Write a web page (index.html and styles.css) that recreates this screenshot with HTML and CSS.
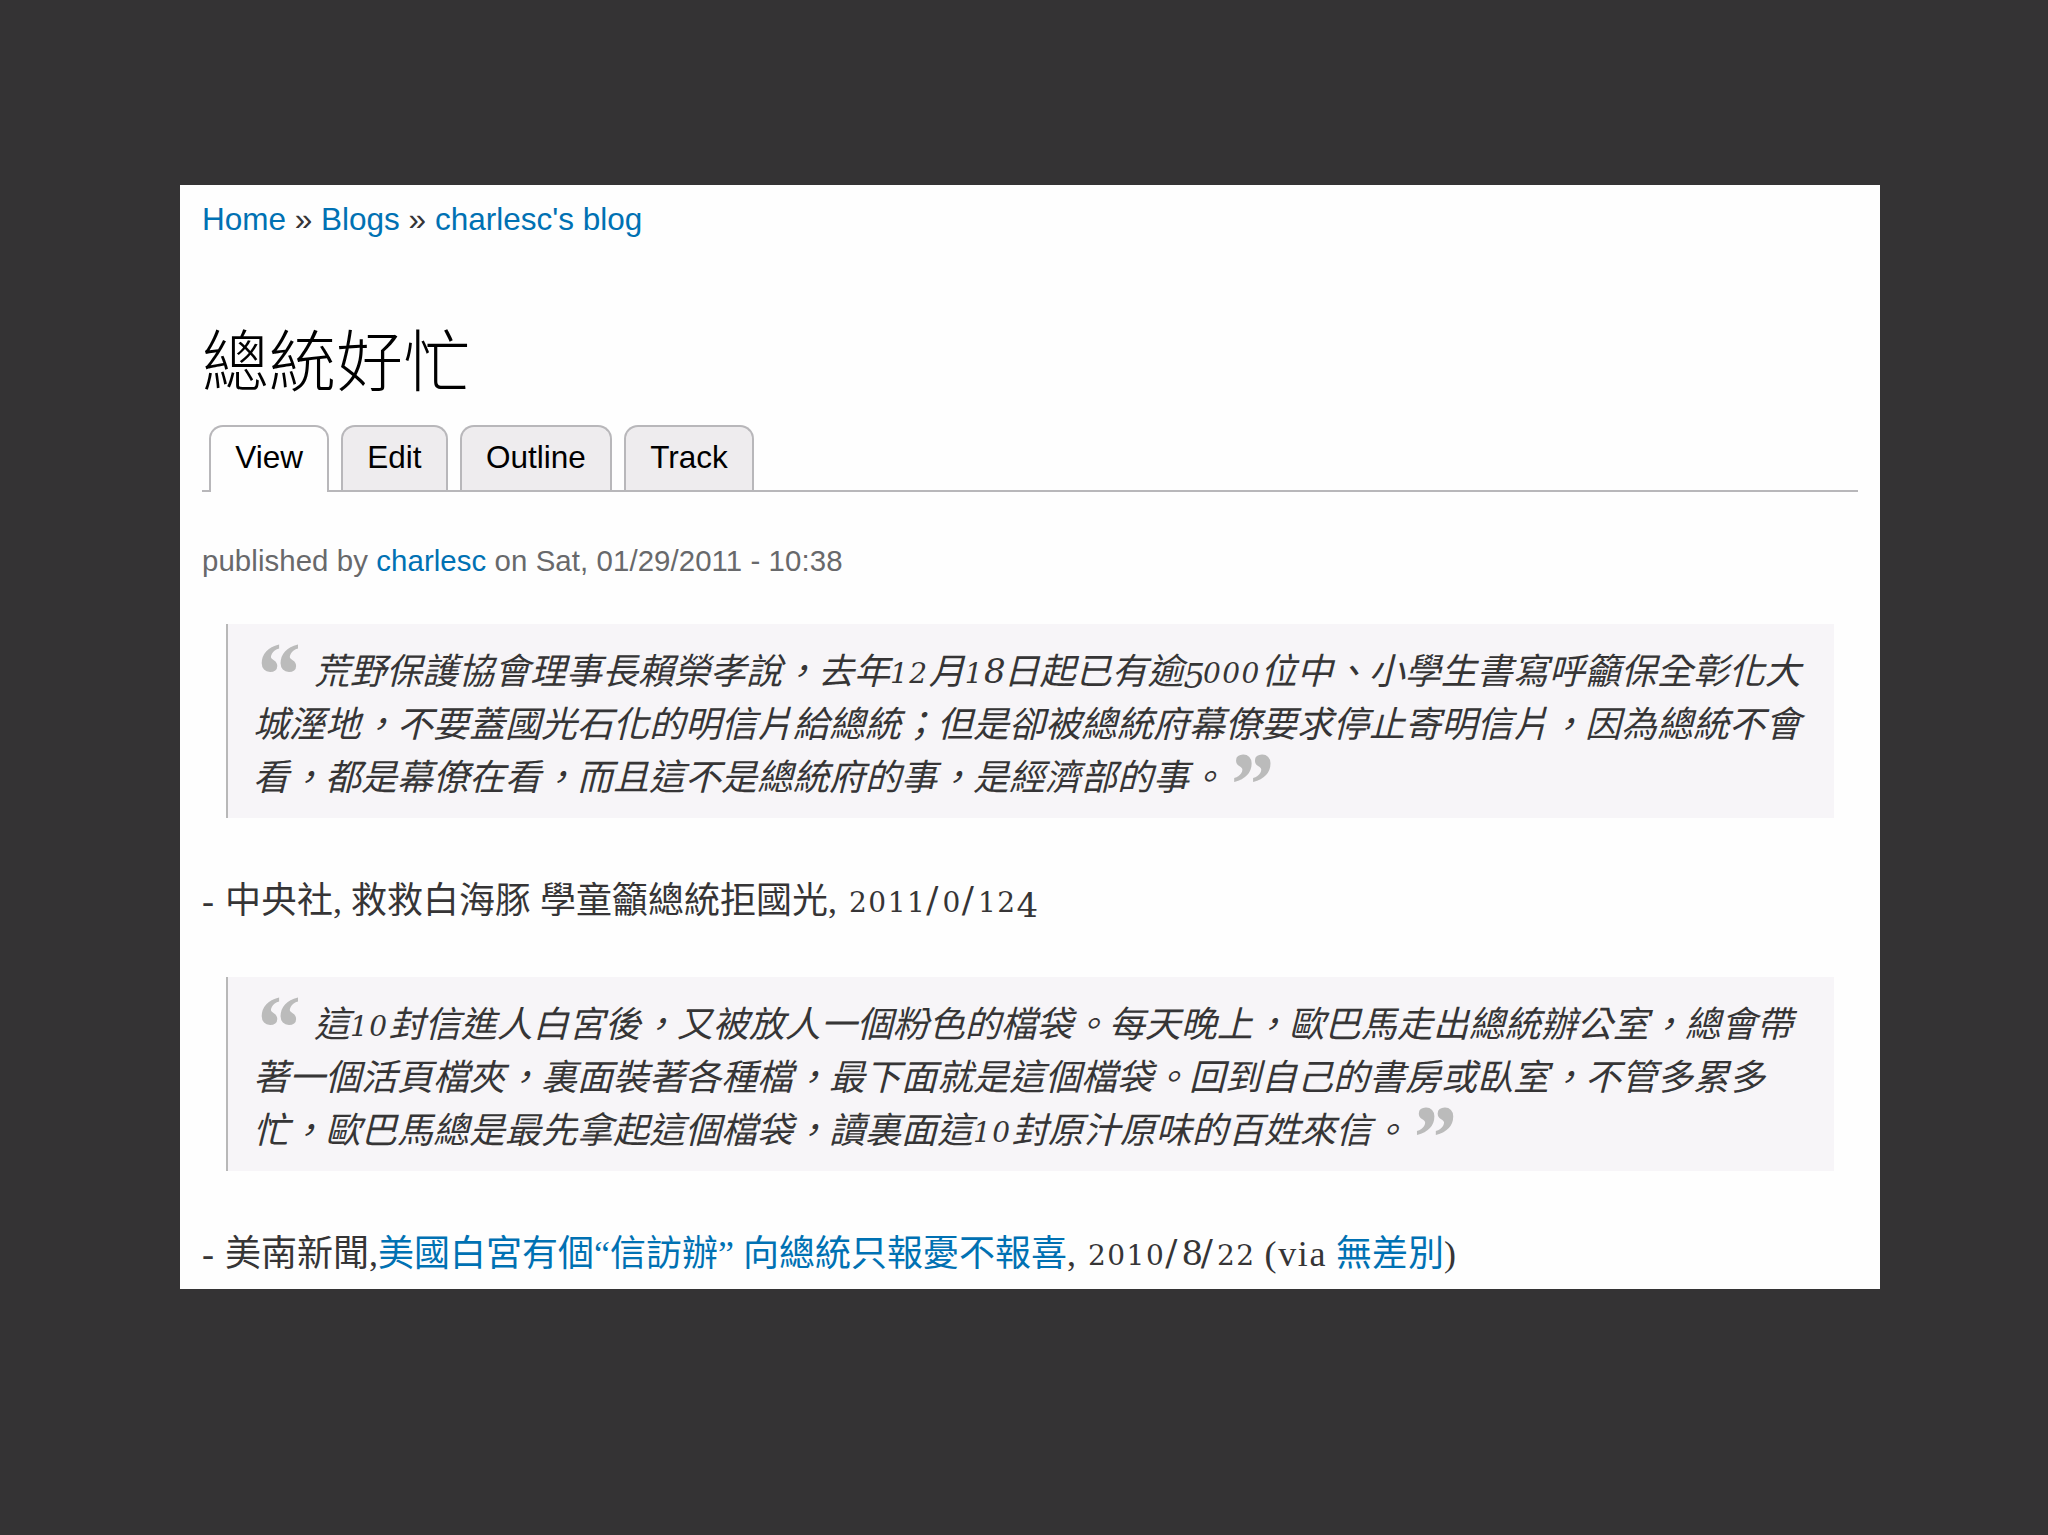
FILE: index.html
```html
<!DOCTYPE html>
<html lang="zh-Hant">

<head>
  <meta charset="UTF-8" />
  <title>總統好忙</title>
  <link rel="stylesheet" href="styles.css">
</head>

<body>
  <div class="page">
    <nav class="breadcrumb">
      <a href="#">Home</a> » <a href="#">Blogs</a> » <a href="#">charlesc's blog</a>
    </nav>

    <h1>總統好忙</h1>

    <ul class="tabs">
      <li class="active"><a href="#">View</a></li>
      <li><a href="#">Edit</a></li>
      <li><a href="#">Outline</a></li>
      <li><a href="#">Track</a></li>
    </ul>

    <p class="submitted">published by <a href="#">charlesc</a> on Sat, 01/29/2011 - 10:38</p>

    <div class="content">
      <blockquote>
        <span class="mark open">“</span>荒野保護協會理事長賴榮孝說，去年<span class="num">12</span>月<span class="num">1<span class="tall">8</span></span>日起已有逾<span class="num"><span class="low">5</span>000</span>位中、小學生書寫呼籲保全彰化大<br>
        城溼地，不要蓋國光石化的明信片給總統；但是卻被總統府幕僚要求停止寄明信片，因為總統不會<br>
        看，都是幕僚在看，而且這不是總統府的事，是經濟部的事。<span class="mark end">”</span>
      </blockquote>

      <p class="source"><span class="dash">-</span>中央社, 救救白海豚 學童籲總統拒國光, <span class="num">2011<span class="slash">/</span>0<span class="slash">/</span>12<span class="low">4</span></span></p>

      <blockquote>
        <span class="mark open">“</span>這<span class="num">10</span>封信進人白宮後，又被放人一個粉色的檔袋。每天晚上，歐巴馬走出總統辦公室，總會帶<br>
        著一個活頁檔夾，裏面裝著各種檔，最下面就是這個檔袋。回到自己的書房或臥室，不管多累多<br>
        忙，歐巴馬總是最先拿起這個檔袋，讀裏面這<span class="num">10</span>封原汁原味的百姓來信。<span class="mark end">”</span>
      </blockquote>

      <p class="source"><span class="dash">-</span>美南新聞,<a href="#">美國白宮有個“信訪辦” 向總統只報憂不報喜</a>, <span class="num">2010<span class="slash">/</span><span class="tall">8</span><span class="slash">/</span>22</span> <span class="via">(via</span> <a href="#">無差別</a>)</p>
    </div>
  </div>
</body>

</html>
```
FILE: styles.css
```css
* {
  box-sizing: border-box;
}

body {
  margin: 0;
  padding: 185px 168px 0 180px;
  min-height: 1535px;
  background: #343334;
  color: #363536;
  font-family: "Liberation Sans", Arial, "Noto Sans CJK TC", sans-serif;
}

a {
  color: #0071b3;
  text-decoration: none;
}

.page {
  height: 1104px;
  padding: 16px 22px 0;
  background: #fefefe;
}

.breadcrumb {
  font-size: 31.5px;
  line-height: 36px;
}

h1 {
  margin: 82px 0 30px;
  font-family: "Noto Sans CJK TC", sans-serif;
  font-size: 67px;
  font-weight: 300;
  line-height: 76px;
  color: #000;
}

/* tabs */
.tabs {
  display: flex;
  gap: 12px;
  height: 67px;
  margin: 0;
  padding: 0 0 0 7px;
  list-style: none;
  border-bottom: 2px solid #b8b7ba;
}

.tabs li {
  height: 65px;
  padding: 12px 24.2px 0;
  background: #eeecee;
  border: 2px solid #b8b7ba;
  border-bottom: none;
  border-radius: 14px 14px 0 0;
}

.tabs li.active {
  height: 67px;
  background: #fefefe;
}

.tabs a {
  display: block;
  font-size: 31.5px;
  line-height: 36px;
  color: #000;
}

.submitted {
  margin: 51px 0 45px;
  font-size: 29.4px;
  line-height: 36px;
  letter-spacing: 0.08px;
  color: #68696b;
}

/* post body */
.content {
  font-family: "Liberation Serif", Georgia, "Noto Sans CJK TC", serif;
  font-size: 36px;
  line-height: 53px;
  white-space: nowrap;
}

blockquote {
  height: 194px;
  margin: 0 24px;
  padding: 22px 0 0 25px;
  background: #f7f5f8;
  border-left: 2px solid #b8b8b8;
  font-style: italic;
}

.mark {
  display: inline-block;
  height: 0;
  font-size: 92px;
  font-weight: bold;
  line-height: 0;
  color: #bbb;
}

.mark.open {
  width: 61px;
  vertical-align: -21px;
}

.mark.end {
  margin-left: 1px;
  vertical-align: -25px;
}

.source {
  height: 53px;
  margin: 53px 0;
  padding-top: 4px;
}

.dash {
  display: inline-block;
  width: 23px;
}

/* old style figures: small by default, 4 and 5 hang, 8 stands up */
.num {
  font-family: "DejaVu Serif", serif;
  font-size: 28px;
  line-height: 0;
  letter-spacing: 1.5px;
  vertical-align: 1px;
}

.source .num {
  margin-left: 3px;
}

.tall,
.low {
  font-size: 34px;
  letter-spacing: -2.2px;
}

.low {
  vertical-align: -5px;
}

.slash {
  font-size: 36px;
  letter-spacing: 4px;
}

.via {
  letter-spacing: 1.6px;
}
```
